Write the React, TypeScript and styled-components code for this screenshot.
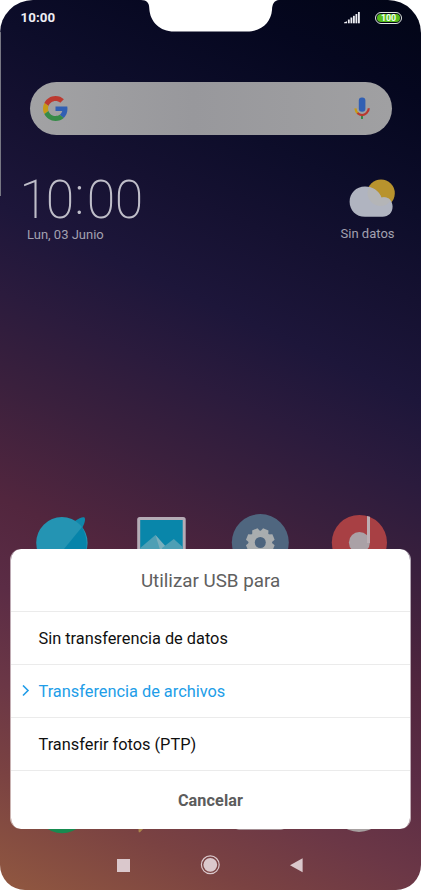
import React from "react";
import styled, { createGlobalStyle } from "styled-components";

const GlobalStyle = createGlobalStyle`
  * { box-sizing: border-box; }
  html, body { margin: 0; background: #fff; }
  body { font-family: Roboto, "Liberation Sans", sans-serif; overflow: hidden; }
`;

const Phone = styled.main`
  position: relative;
  display: flex;
  flex-direction: column;
  width: 421px;
  height: 890px;
  overflow: hidden;
  border-radius: 33px 33px 25px 25px;
  background: linear-gradient(
    205deg,
    #020516 0%,
    #05071f 9%,
    #0d0d2a 20%,
    #151131 28%,
    #1d163a 37%,
    #2b1b3d 45%,
    #3a203d 53%,
    #52263e 64%,
    #5b2c45 72%,
    #6b3746 81%,
    #7a4242 89%,
    #915840 100%
  );
`;

const SideKey = styled.div`
  position: absolute;
  left: 0;
  top: 32px;
  width: 1px;
  height: 164px;
  background: #777783;
`;

const Notch = styled.svg`
  position: absolute;
  left: 141px;
  top: 0;
`;

const StatusBar = styled.header`
  display: flex;
  align-items: center;
  justify-content: space-between;
  height: 35px;
  padding: 0 19px 0 20.5px;
`;

const StatusTime = styled.span`
  font-size: 13.3px;
  font-weight: 700;
  letter-spacing: 0.1px;
  color: #eeeef4;
`;

const StatusIcons = styled.div`
  display: flex;
  align-items: center;
  gap: 15px;
`;

const Battery = styled.div`
  display: flex;
  width: 27px;
  height: 12px;
  padding: 1px;
  border: 1.5px solid #e4eae4;
  border-radius: 6px;
`;

const BatteryLevel = styled.span`
  flex: 1;
  border-radius: 5px;
  background: #55bb1c;
  color: #f4fff0;
  font-size: 8.8px;
  font-weight: 700;
  line-height: 8.5px;
  text-align: center;
`;

const SearchBar = styled.div`
  display: flex;
  align-items: center;
  justify-content: space-between;
  flex: none;
  height: 52.5px;
  margin: 47.3px 29px 0 29.5px;
  padding: 0 21px 0 13.5px;
  border-radius: 27px;
  background: linear-gradient(90deg, #a2a2a4, #98989c 45%, #a0a0a2);
`;

const Widgets = styled.section`
  display: flex;
  justify-content: space-between;
  flex: none;
  height: 110px;
  margin-top: 37.2px;
  padding: 0 26.5px 0 27px;
  color: #a3a1b0;
  font-size: 13px;
  line-height: 16px;
`;

const Clock = styled.div`
  display: flex;
  flex-direction: column;
`;

const ClockTime = styled.time`
  display: flex;
  width: 123px;
  height: 55px;
  margin-left: -4px;
  color: #bfbec9;
  font-size: 54.5px;
  font-weight: 200;
  line-height: 55px;
  transform: scaleX(0.95);
  transform-origin: left;
`;

const ClockPart = styled.span<{ $width: number; $rise?: number }>`
  display: flex;
  flex: none;
  justify-content: center;
  width: ${(p) => p.$width}px;
  height: 55px;
  margin-top: ${(p) => -(p.$rise ?? 0)}px;
`;

const Weather = styled.div`
  display: flex;
  flex-direction: column;
  align-items: flex-end;
  padding-top: 7px;
  svg { margin-bottom: 8px; }
`;

const AppGrid = styled.section`
  display: grid;
  grid-template-columns: repeat(4, 99px);
  grid-template-rows: 60px 60px;
  row-gap: 202px;
  justify-content: center;
  justify-items: center;
  margin-top: 231.8px;
`;

const NavBar = styled.nav`
  display: flex;
  align-items: center;
  justify-content: space-between;
  flex: none;
  height: 50px;
  margin-top: auto;
  padding: 0 118px 0 117px;
`;

const Dialog = styled.section`
  position: absolute;
  left: 10px;
  right: 10px;
  bottom: 61px;
  overflow: hidden;
  border: solid rgba(255, 255, 255, 0.6);
  border-width: 0 1px;
  border-radius: 11px;
  background: #fff;
  background-clip: padding-box;
`;

const DialogTitle = styled.h1`
  height: 62px;
  margin: 0;
  color: #606060;
  font-size: 18.8px;
  font-weight: 400;
  line-height: 64px;
  text-align: center;
`;

const Option = styled.div<{ $selected?: boolean }>`
  display: flex;
  align-items: center;
  height: 53px;
  border-top: 1px solid #ebebeb;
  color: ${(p) => (p.$selected ? "#219de8" : "#101010")};
  font-size: 16.35px;
`;

const Marker = styled.span`
  display: flex;
  width: 27.5px;
  padding-left: 10.5px;
`;

const Cancel = styled.div`
  height: 59px;
  border-top: 1px solid #ebebeb;
  color: #5c5c5c;
  font-size: 16.2px;
  font-weight: 700;
  line-height: 59px;
  text-align: center;
  letter-spacing: 0.1px;
`;

const options = [
  { label: "Sin transferencia de datos" },
  { label: "Transferencia de archivos", selected: true },
  { label: "Transferir fotos (PTP)" },
];

const SignalIcon = () => (
  <svg width="16" height="12" viewBox="0 0 16 12" fill="#eeeef4">
    <path d="M0 11.3V10.5L3 9.3V11.3Z" />
    <rect x="3.9" y="7.5" width="1.8" height="3.8" />
    <rect x="6.5" y="5.5" width="1.8" height="5.8" />
    <rect x="9" y="3.8" width="1.8" height="7.5" />
    <rect x="11.5" y="2" width="1.8" height="9.3" />
    <rect x="14" y="0" width="1.8" height="11.3" />
  </svg>
);

const GoogleIcon = () => (
  <svg width="25" height="25" viewBox="0 0 48 48">
    <path fill="#bc3a30" d="M24 9.5c3.54 0 6.71 1.22 9.21 3.6l6.85-6.85C35.9 2.38 30.47 0 24 0 14.62 0 6.51 5.38 2.56 13.22l7.98 6.19C12.43 13.72 17.74 9.5 24 9.5z" />
    <path fill="#315fb3" d="M46.98 24.55c0-1.57-.15-3.09-.38-4.55H24v9.02h12.94c-.58 2.96-2.26 5.48-4.78 7.18l7.73 6c4.51-4.18 7.09-10.36 7.09-17.65z" />
    <path fill="#c79a16" d="M10.53 28.59c-.48-1.45-.76-2.99-.76-4.59s.27-3.14.76-4.59l-7.98-6.19C.92 16.46 0 20.12 0 24c0 3.88.92 7.54 2.56 10.78l7.97-6.19z" />
    <path fill="#368b47" d="M24 48c6.48 0 11.93-2.13 15.89-5.81l-7.73-6c-2.15 1.45-4.92 2.3-8.16 2.3-6.26 0-11.57-4.22-13.47-9.91l-7.98 6.19C6.51 42.62 14.62 48 24 48z" />
  </svg>
);

const MicIcon = () => (
  <svg width="18" height="23" viewBox="0 0 18 23" fill="none">
    <rect x="5.8" y="0.5" width="6.6" height="14.3" rx="3" fill="#315fb3" />
    <path d="M9 18V22" stroke="#368b47" strokeWidth="2" />
    <path d="M2.4 11.3C2.6 14 3.6 15.4 5.2 16.7" stroke="#c79a16" strokeWidth="2.2" />
    <path d="M4.4 16C7.2 18.8 11 18.8 13.6 16C14.9 14.8 15.7 13.2 15.8 11.3" stroke="#b9392f" strokeWidth="2.2" />
  </svg>
);

const WeatherIcon = () => (
  <svg width="46" height="39" viewBox="0 0 46 39">
    <circle cx="32" cy="14.3" r="13.8" fill="#b8932d" />
    <path d="M16 7.6C24 7.6 30 12 32.6 18.7C38.5 16.7 43.6 21.5 43.6 27.5C43.6 33.5 39.5 37.8 33.5 37.8H16C7 37.8 0.6 31 0.6 22.7S7 7.6 16 7.6Z" fill="#b0b4c0" />
    <path d="M20 8.3C26 10 30.5 13.3 32.6 18.7C36 17.6 39.5 18.7 41.5 21C38 29 25 29 20 20C18 16 18 12 20 8.3Z" fill="#b7b6b0" opacity=".6" />
  </svg>
);

const BrowserIcon = () => (
  <svg width="60" height="60" viewBox="0 0 60 60">
    <path d="M43 7C47 4 51 2.5 52.5 3.5C54 6 52 11 49 16Z" fill="#0f87ab" />
    <circle cx="29.9" cy="28.8" r="25.7" fill="#2494b3" />
    <path d="M50 13C58 27 55 45 45 50L19 54L32 35Z" fill="#0684aa" />
  </svg>
);

const GalleryIcon = () => (
  <svg width="60" height="60" viewBox="0 0 60 60">
    <rect x="6.2" y="3" width="48.5" height="51" rx="2.5" fill="#b5acb6" />
    <rect x="9.2" y="6" width="42.5" height="43" fill="#0986aa" />
    <path d="M9.2 34L24.5 21L42 44L30 54H9.2Z" fill="#4e9fb5" />
    <path d="M24.5 21L37 35L42 49H33Z" fill="#7aafbd" />
    <path d="M31 34L42.8 25L51.7 33V54H33Z" fill="#4e9fb5" />
  </svg>
);

const SettingsIcon = () => (
  <svg width="60" height="60" viewBox="0 0 60 60">
    <circle cx="30.3" cy="28.6" r="28.5" fill="#4f667f" />
    <g fill="#a9adaf">
      <circle cx="30.3" cy="28.5" r="11.8" />
      {[22.5, 67.5, 112.5, 157.5, 202.5, 247.5, 292.5, 337.5].map((angle) => (
        <path key={angle} d="M25.7 19L27.4 14.2H33.2L34.9 19Z" transform={`rotate(${angle} 30.3 28.5)`} />
      ))}
    </g>
    <circle cx="30.3" cy="28.5" r="5.5" fill="#4c647e" />
  </svg>
);

const MusicIcon = () => (
  <svg width="60" height="60" viewBox="0 0 60 60">
    <circle cx="30.4" cy="28.5" r="27.6" fill="#a84044" />
    <circle cx="30.4" cy="28.5" r="10.5" fill="#aaa1a6" />
    <path d="M38 2L41 2.7V29H38Z" fill="#bcaeb3" />
  </svg>
);

const PhoneIcon = () => (
  <svg width="60" height="60" viewBox="0 0 60 60">
    <circle cx="30" cy="31.3" r="26" fill="#178b50" />
  </svg>
);

const NotesIcon = () => (
  <svg width="60" height="60" viewBox="0 0 60 60">
    <path d="M7.2 50H15L9 56.3H7.7Z" fill="#aa864b" />
  </svg>
);

const CameraIcon = () => (
  <svg width="60" height="60" viewBox="0 0 60 60">
    <rect x="3" y="10" width="54" height="43.8" rx="6" fill="#b5aaad" />
  </svg>
);

const ChromeIcon = () => (
  <svg width="60" height="60" viewBox="0 0 60 60">
    <circle cx="30" cy="27.9" r="28" fill="#a7a0a0" />
  </svg>
);

export default function App() {
  return (
    <>
      <GlobalStyle />
      <Phone>
        <SideKey />
        <Notch width="138" height="32" viewBox="0 0 138 32">
          <path d="M0 0C6 0 8.3 3 8.3 8.5C9 22 19 31.5 33 31.5H106C121 31.5 130 22 131 10C131.3 4 133 .5 138 0Z" fill="#fff" />
        </Notch>
        <StatusBar>
          <StatusTime>10:00</StatusTime>
          <StatusIcons>
            <SignalIcon />
            <Battery>
              <BatteryLevel>100</BatteryLevel>
            </Battery>
          </StatusIcons>
        </StatusBar>
        <SearchBar>
          <GoogleIcon />
          <MicIcon />
        </SearchBar>
        <Widgets>
          <Clock>
            <ClockTime>
              <ClockPart $width={22.8}>1</ClockPart>
              <ClockPart $width={32.2}>0</ClockPart>
              <ClockPart $width={8.6} $rise={4}>:</ClockPart>
              <ClockPart $width={37}>0</ClockPart>
              <ClockPart $width={22}>0</ClockPart>
            </ClockTime>
            <span>Lun, 03 Junio</span>
          </Clock>
          <Weather>
            <WeatherIcon />
            <span>Sin datos</span>
          </Weather>
        </Widgets>
        <AppGrid>
          <BrowserIcon />
          <GalleryIcon />
          <SettingsIcon />
          <MusicIcon />
          <PhoneIcon />
          <NotesIcon />
          <CameraIcon />
          <ChromeIcon />
        </AppGrid>
        <NavBar>
          <svg width="13" height="13">
            <rect width="13" height="13" fill="#dac8cc" />
          </svg>
          <svg width="20" height="20" viewBox="0 0 20 20">
            <circle cx="10.3" cy="9.8" r="8.9" fill="none" stroke="#dac8cc" strokeWidth="1.2" />
            <circle cx="10.3" cy="9.8" r="6.9" fill="#dac8cc" />
          </svg>
          <svg width="13" height="15" viewBox="0 0 13 15">
            <path d="M0 7.2L12.6 .2V14.2Z" fill="#dac8cc" />
          </svg>
        </NavBar>
        <Dialog>
          <DialogTitle>Utilizar USB para</DialogTitle>
          {options.map((option) => (
            <Option key={option.label} $selected={option.selected}>
              <Marker>
                {option.selected && (
                  <svg width="8" height="12" viewBox="0 0 8 12">
                    <path d="M1 .5L6 5.5L1 10.5" fill="none" stroke="#219de8" strokeWidth="1.6" />
                  </svg>
                )}
              </Marker>
              {option.label}
            </Option>
          ))}
          <Cancel>Cancelar</Cancel>
        </Dialog>
      </Phone>
    </>
  );
}
